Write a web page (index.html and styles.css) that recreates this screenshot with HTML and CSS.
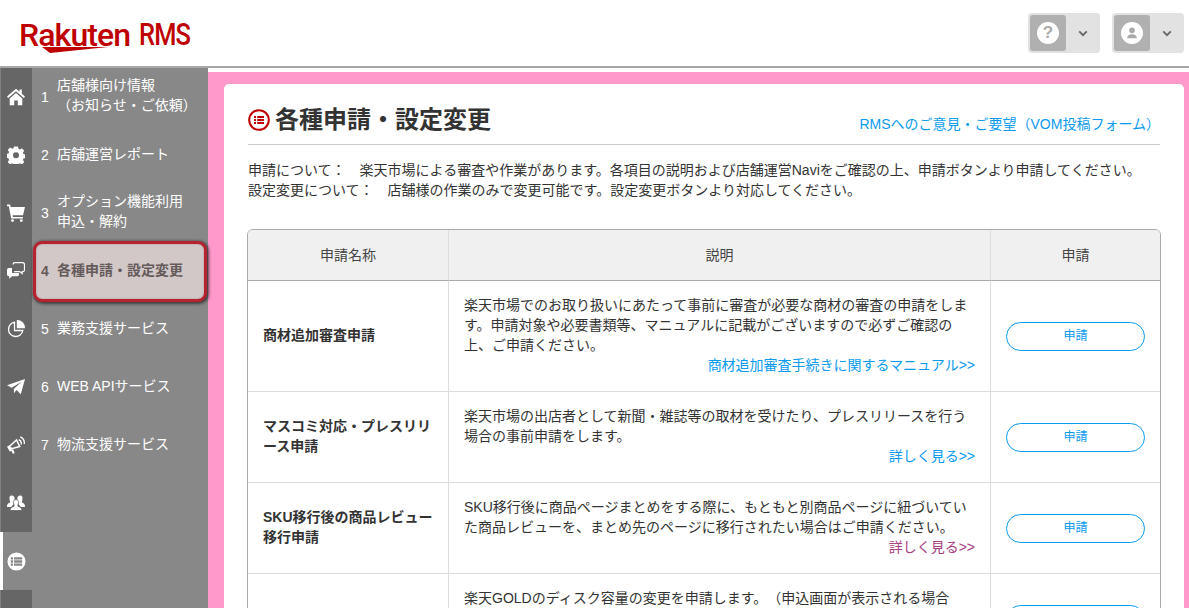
FILE: index.html
```html
<!DOCTYPE html>
<html lang="ja">
<head>
<meta charset="utf-8">
<title>各種申請・設定変更</title>
<link rel="stylesheet" href="styles.css">
</head>
<body>
<header class="top">
  <div class="logo">
    <span class="logo-word">Rakuten</span><span class="logo-rms">RMS</span>
    <svg class="logo-swoosh" viewBox="0 0 66 6" width="66" height="6"><path d="M0 0H66L8 6Z" fill="#bf0000"/></svg>
  </div>
  <div class="top-tools">
    <div class="tool">
      <span class="tool-icon"><span class="tool-circle tool-q">?</span></span>
      <svg class="tool-chev" viewBox="0 0 12 8" width="10" height="7"><path d="M1.500 1.500L6 6l4.500-4.500" fill="none" stroke="#666" stroke-width="2.200"/></svg>
    </div>
    <div class="tool">
      <span class="tool-icon"><span class="tool-circle">
        <svg viewBox="0 0 16 16" width="14" height="14"><circle cx="8" cy="5" r="3.200" fill="#aaa"/><path d="M2.500 14c0-3 2-4 4-4.600h3c2 .6 4 1.600 4 4.600z" fill="#aaa"/></svg>
      </span></span>
      <svg class="tool-chev" viewBox="0 0 12 8" width="10" height="7"><path d="M1.500 1.500L6 6l4.500-4.500" fill="none" stroke="#666" stroke-width="2.200"/></svg>
    </div>
  </div>
</header>
<div class="body">
  <nav class="side">
    <a class="nav-row">
      <span class="nav-icon"><svg viewBox="0 0 18 18" width="18" height="18"><path d="M9 .8L0 8.600l1.200 1.400L9 3.300l7.800 6.700L18 8.600l-3.200-2.800V1.500h-2.300v2.300z" fill="#fff"/><path d="M2.700 10.500L9 5l6.300 5.500v6.700h-4.500v-4.700H7.200v4.700H2.700z" fill="#fff"/></svg></span>
      <span class="nav-num">1</span><span class="nav-label nav-label-two">店舗様向け情報<br>（お知らせ・ご依頼）</span>
    </a>
    <a class="nav-row">
      <span class="nav-icon"><svg viewBox="0 0 18 18" width="18" height="18"><path fill-rule="evenodd" d="M7 .5h4l.4 2.300 1.500.7 2-1.300 2.400 2.500-1.400 1.900.6 1.500 1.900.5v3.500l-1.900.5-.6 1.500 1.400 1.900-2.400 2.500-2-1.300-1.500.7-.4 1.500H7l-.4-1.500-1.500-.7-2 1.300-2.400-2.500 1.400-1.900-.6-1.500L-.4 11.400V7.900l1.900-.5.600-1.500-1.400-1.900 2.400-2.500 2 1.300 1.500-.7zM9 6.200a3 3 0 100 6 3 3 0 000-6z" fill="#fff"/></svg></span>
      <span class="nav-num">2</span><span class="nav-label">店舗運営レポート</span>
    </a>
    <a class="nav-row">
      <span class="nav-icon"><svg viewBox="0 0 18 18" width="18" height="18"><path d="M0 .5h3l.8 2.500H18l-2 8.300H5.500l.4 1.600H16V14.600H4.200L1.800 2.200H0z" fill="#fff"/><circle cx="5.500" cy="16.600" r="1.400" fill="#fff"/><circle cx="14.300" cy="16.600" r="1.400" fill="#fff"/></svg></span>
      <span class="nav-num">3</span><span class="nav-label nav-label-two">オプション機能利用<br>申込・解約</span>
    </a>
    <a class="nav-row nav-row-mark">
      <span class="nav-icon"><svg viewBox="0 0 18 18" width="18" height="18"><path d="M6 2.500A1.800 1.800 0 017.800.7h7.900A1.800 1.800 0 0117.500 2.500v5.300a1.800 1.800 0 01-1.800 1.800h-.5v2l-2.500-2H7.200" fill="none" stroke="#fff" stroke-width="1.200"/><path d="M0 7.700A1.800 1.800 0 011.800 5.900H5V11h7v1.500a1.800 1.800 0 01-1.800 1.800H5l-2.800 2.500v-2.500h-.4A1.800 1.800 0 010 12.500z" fill="#fff"/></svg></span>
      <span class="nav-num">4</span><span class="nav-label">各種申請・設定変更</span>
    </a>
    <a class="nav-row">
      <span class="nav-icon"><svg viewBox="0 0 18 18" width="18" height="18"><path d="M7.500 2.200a7.200 7.200 0 108.300 8.300H7.500z" fill="none" stroke="#fff" stroke-width="1.300"/><path d="M9.800 0A8 8 0 0118 8.200H9.800z" fill="#fff"/></svg></span>
      <span class="nav-num">5</span><span class="nav-label">業務支援サービス</span>
    </a>
    <a class="nav-row">
      <span class="nav-icon"><svg viewBox="0 0 18 18" width="18" height="18"><path d="M18 1L0 7.300l4.700 2.500L14.800 3.600 6.800 11l.2 4.300 2.500-3.200 4.300 4.200z" fill="#fff"/></svg></span>
      <span class="nav-num">6</span><span class="nav-label">WEB APIサービス</span>
    </a>
    <a class="nav-row">
      <span class="nav-icon"><svg viewBox="0 0 18 18" width="18" height="18"><path d="M2 10.700L9.500 4l3.200 6.500-8 2.200z" fill="none" stroke="#fff" stroke-width="1.500"/><path d="M0 10.500l2.500-1 2.700 5-2.500 1zM4 14l2.200-.8 1.500 4-1.900.6z" fill="#fff"/><path d="M11.700 3.600a4 4 0 012.300 4.900M13.300.8a7 7 0 014 7.200" fill="none" stroke="#fff" stroke-width="1.300"/></svg></span>
      <span class="nav-num">7</span><span class="nav-label">物流支援サービス</span>
    </a>
    <a class="nav-row">
      <span class="nav-icon"><svg viewBox="0 0 18 18" width="18" height="18"><path d="M4.700 1.500c2.200 0 3.300 1.800 3 4l-.7 2.500.5 1.300-3.500 3.700H0c0-3 .8-3.500 3.200-4.500L2.600 5.500c-.3-2.200-.1-4 2.100-4zM13.300 1.500c-2.200 0-3.300 1.800-3 4l.7 2.500-.5 1.300 3.500 3.700H18c0-3-.8-3.500-3.200-4.500l.6-3c.3-2.200.1-4-2.100-4z" fill="#fff"/><path d="M9 5.500c2 0 2.800 1.500 2.600 3.300l-.8 2.600 .3 1c2.400.8 3.900 1.600 3.900 4.100H3c0-2.500 1.500-3.300 3.900-4.100l.3-1-.8-2.600C6.200 7 7 5.500 9 5.500z" fill="#fff" stroke="#666" stroke-width=".8"/></svg></span>
      <span class="nav-label"></span>
    </a>
    <a class="nav-row nav-row-on">
      <span class="nav-icon"><svg viewBox="0 0 20 20" width="19" height="19"><path fill-rule="evenodd" d="M10 .5a9.500 9.500 0 110 19 9.500 9.500 0 010-19zM4 5.500v2.400h2.400V5.500zm3.400 0v2.400h8.600V5.500zM4 8.800v2.400h2.400V8.800zm3.400 0v2.400h8.600V8.800zM4 12.100v2.400h2.400v-2.400zm3.400 0v2.400h8.600v-2.400z" fill="#fff"/></svg></span>
      <span class="nav-label"></span>
    </a>
    <a class="nav-row"><span class="nav-icon"></span><span class="nav-label"></span></a>
  </nav>
  <main class="stage">
    <section class="card">
      <div class="head">
        <h1 class="title">
          <svg viewBox="0 0 22 22" width="22" height="22"><circle cx="11" cy="11" r="9.800" fill="none" stroke="#bf0000" stroke-width="2"/><path d="M6 7h2v2H6zm3.200 0H16v2H9.200zM6 10h2v2H6zm3.200 0H16v2H9.200zM6 13h2v2H6zm3.200 0H16v2H9.200z" fill="#bf0000"/></svg>
          各種申請・設定変更
        </h1>
        <a class="link vom">RMSへのご意見・ご要望（VOM投稿フォーム）</a>
      </div>
      <p class="intro">申請について：　楽天市場による審査や作業があります。各項目の説明および店舗運営Naviをご確認の上、申請ボタンより申請してください。<br>設定変更について：　店舗様の作業のみで変更可能です。設定変更ボタンより対応してください。</p>
      <table class="grid">
        <thead>
          <tr><th class="c-name">申請名称</th><th class="c-desc">説明</th><th class="c-act">申請</th></tr>
        </thead>
        <tbody>
          <tr>
            <td class="c-name">商材追加審査申請</td>
            <td class="c-desc">楽天市場でのお取り扱いにあたって事前に審査が必要な商材の審査の申請をします。申請対象や必要書類等、マニュアルに記載がございますので必ずご確認の上、ご申請ください。<span class="more"><a class="link">商材追加審査手続きに関するマニュアル&gt;&gt;</a></span></td>
            <td class="c-act"><button class="apply">申請</button></td>
          </tr>
          <tr>
            <td class="c-name">マスコミ対応・プレスリリース申請</td>
            <td class="c-desc">楽天市場の出店者として新聞・雑誌等の取材を受けたり、プレスリリースを行う場合の事前申請をします。<span class="more"><a class="link">詳しく見る&gt;&gt;</a></span></td>
            <td class="c-act"><button class="apply">申請</button></td>
          </tr>
          <tr>
            <td class="c-name">SKU移行後の商品レビュー移行申請</td>
            <td class="c-desc">SKU移行後に商品ページまとめをする際に、もともと別商品ページに紐づいていた商品レビューを、まとめ先のページに移行されたい場合はご申請ください。<span class="more"><a class="link visited">詳しく見る&gt;&gt;</a></span></td>
            <td class="c-act"><button class="apply">申請</button></td>
          </tr>
          <tr class="row-tall">
            <td class="c-name"></td>
            <td class="c-desc">楽天GOLDのディスク容量の変更を申請します。（申込画面が表示される場合</td>
            <td class="c-act"><button class="apply" aria-label="申請"></button></td>
          </tr>
        </tbody>
      </table>
    </section>
  </main>
</div>
</body>
</html>
```
FILE: styles.css
```css
* { box-sizing: border-box; }
html, body { height: 100%; }
body {
  margin: 0;
  overflow: hidden;
  background: #fff;
  color: #333;
  font-family: "Liberation Sans", "Noto Sans CJK JP", sans-serif;
  font-size: 14px;
  line-height: 20px;
  text-spacing-trim: space-all;
  display: flex;
  flex-direction: column;
}

/* header */
.top {
  flex: none;
  height: 68px;
  border-bottom: 2px solid #a8a8a8;
  display: flex;
  justify-content: space-between;
  padding: 13px 5px 0 19px;
}
.logo {
  position: relative;
  display: flex;
  gap: 9px;
  height: 46px;
  color: #bf0000;
  font-family: "Roboto", sans-serif;
  font-weight: 500;
  font-size: 32px;
  line-height: 44px;
}
.logo-word { letter-spacing: -0.9px; }
.logo-rms {
  font-size: 31px;
  letter-spacing: -1px;
  transform: scaleX(0.82);
  transform-origin: left center;
}
.logo-swoosh { position: absolute; left: 23px; top: 34px; }
.top-tools { display: flex; gap: 12px; }
.tool {
  width: 72px;
  height: 40px;
  background: #e2e2e2;
  border-radius: 4px;
  display: flex;
  align-items: center;
  padding-left: 2px;
}
.tool-icon {
  width: 36px;
  height: 36px;
  background: #b0b0b0;
  border-radius: 3px;
  display: flex;
  align-items: center;
  justify-content: center;
}
.tool-circle {
  width: 22px;
  height: 22px;
  border-radius: 50%;
  background: #fff;
  display: flex;
  align-items: center;
  justify-content: center;
}
.tool-q { color: #aaa; font-weight: 700; font-size: 17px; }
.tool-chev { margin-left: 12px; }

/* layout */
.body { flex: 1; display: flex; min-height: 0; }
.side {
  flex: none;
  width: 208px;
  background: #888;
  color: #fff;
}
.nav-row {
  height: 58px;
  display: flex;
  align-items: center;
}
.nav-icon {
  flex: none;
  width: 32px;
  height: 58px;
  background: #666;
  border-left: 1px solid #808080;
  display: flex;
  align-items: center;
  justify-content: center;
  padding-right: 1px;
}
.nav-num { flex: none; width: 16px; margin-left: 9px; font-size: 14px; }
.nav-label { padding-bottom: 2px; }
.nav-label-two { padding-bottom: 4px; }
.nav-row-mark { position: relative; color: #655a5a; font-weight: 700; }
.nav-row-mark::after {
  content: "";
  box-sizing: border-box;
  position: absolute;
  left: 33px;
  top: -1px;
  width: 174px;
  height: 61px;
  border: 3px solid #b8222e;
  border-radius: 9px;
  background: #d3c8c8;
  box-shadow: 1px 1px 3px 1px rgba(30, 30, 30, 0.7), inset 0 0 2px rgba(40, 20, 20, 0.3);
}
.nav-row-mark .nav-num, .nav-row-mark .nav-label { position: relative; z-index: 1; }
.nav-row-on .nav-icon { background: #888; border-left: 3px solid #fff; padding-right: 3px; }

/* content */
.stage {
  flex: 1;
  min-width: 0;
  margin-top: 4px;
  background: #ff99cc;
  padding: 12px 5px 0 16px;
  overflow: hidden;
}
.card {
  background: #fff;
  border-radius: 5px 5px 0 0;
  padding: 21px 24px 0;
  min-height: 600px;
}
.head {
  height: 40px;
  border-bottom: 1px solid #ccc;
  display: flex;
  justify-content: space-between;
  align-items: flex-end;
}
.title {
  margin: 0;
  display: flex;
  align-items: center;
  gap: 5px;
  font-size: 24px;
  line-height: 30px;
  font-weight: 700;
  color: #333;
  align-self: flex-start;
}
.link { color: #0a9bef; }
.link.visited { color: #a8407f; }
.vom { padding-bottom: 10px; }
.intro { margin: 15px 0 29px; color: #333; }

.grid {
  width: 914px;
  margin-left: -1px;
  border: 1px solid #aaa;
  border-radius: 6px;
  border-collapse: separate;
  border-spacing: 0;
  table-layout: fixed;
}
.grid th {
  height: 51px;
  background: #f0f0f0;
  font-weight: 400;
  color: #444;
  text-align: center;
  border-bottom: 1px solid #aaa;
  border-left: 1px solid #ddd;
}
.grid th:first-child { border-left: 0; border-top-left-radius: 5px; }
.grid th:last-child { border-top-right-radius: 5px; }
.grid td {
  border-top: 1px solid #ddd;
  border-left: 1px solid #ddd;
  padding: 14px 15px 16px;
  vertical-align: top;
}
.grid tbody tr:first-child td { border-top: 0; }
.grid td:first-child { border-left: 0; }
.c-name { width: 200px; }
.c-act { width: 170px; }
.grid td.c-name {
  padding-left: 15px;
  padding-right: 10px;
  vertical-align: middle;
  font-weight: 700;
}
.grid td.c-act { padding-top: 0; padding-bottom: 0; vertical-align: middle; }
.row-tall td { height: 92px; }
.more { display: block; text-align: right; }
.apply {
  display: block;
  width: 139px;
  height: 29px;
  padding: 0;
  background: #fff;
  border: 1px solid #0a9bef;
  border-radius: 15px;
  color: #0a9bef;
  font: 12px/1 "Liberation Sans", "Noto Sans CJK JP", sans-serif;
}
```
